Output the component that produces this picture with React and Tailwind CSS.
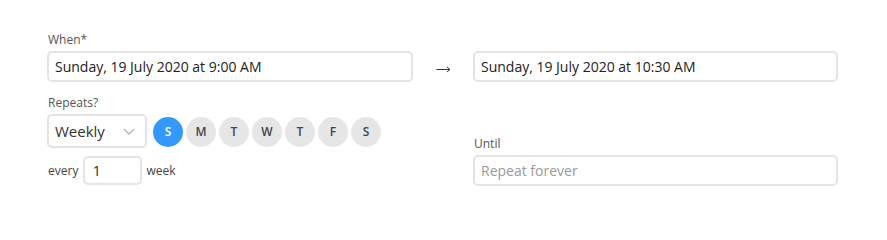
import React from "react";

const DAYS = ["S", "M", "T", "W", "T", "F", "S"];

function Field({ value, placeholder, className = "" }) {
  return (
    <div className={`flex h-[31px] items-center rounded-[5px] border-2 border-[#e4e4e4] bg-white px-[6px] text-[14px] ${className}`}>
      {value ? <span className="text-[#222]">{value}</span> : <span className="text-[#9a9a9a]">{placeholder}</span>}
    </div>
  );
}

export default function App() {
  return (
    <div className="flex bg-white pl-[47px] pt-[32px] h-[220px]" style={{ fontFamily: '"Open Sans", "Noto Sans", sans-serif' }}>
      <div className="w-[366px]">
        <div className="ml-px text-[12px] leading-[16px] text-[#555]">When*</div>
        <Field value="Sunday, 19 July 2020 at 9:00 AM" className="mt-[3px]" />
        <div className="ml-px mt-[13px] text-[12px] leading-[16px] text-[#555]">Repeats?</div>
        <div className="mt-[3px] flex items-center">
          <div className="flex h-[34px] w-[100px] items-center justify-between rounded-[5px] border-2 border-[#e4e4e4] pl-[6px] pr-[10px] text-[15px] text-[#333]">
            <span>Weekly</span>
            <svg width="12" height="7" viewBox="0 0 12 7" fill="none" stroke="#b5b5b5" strokeWidth="1.3">
              <path d="M1 1l5 5 5-5" />
            </svg>
          </div>
          <div className="ml-[6px] mt-[2px] flex gap-[3px]">
            {DAYS.map((d, i) => (
              <div
                key={i}
                className={`grid h-[30px] w-[30px] place-items-center rounded-full text-[12px] font-semibold ${i === 0 ? "bg-[#3399ff] text-white" : "bg-[#e6e6e6] text-[#444]"}`}
              >
                {d}
              </div>
            ))}
          </div>
        </div>
        <div className="mt-[8px] flex items-center text-[12px] text-[#444]">
          <span className="ml-px">every</span>
          <div className="ml-[5px] flex h-[29px] w-[59px] items-center rounded-[5px] border-2 border-[#e4e4e4] px-[7px] text-[15px] text-[#333]">1</div>
          <span className="ml-[4px]">week</span>
        </div>
      </div>
      <div className="flex w-[60px] justify-center pt-[34px]">
        <svg width="15" height="7" viewBox="0 0 15 7" fill="none" stroke="#333" strokeWidth="1">
          <path d="M0.5 3.5h13.5M11 1l3 2.5-3 2.5" />
        </svg>
      </div>
      <div className="w-[365px]">
        <div className="h-[16px]" />
        <Field value="Sunday, 19 July 2020 at 10:30 AM" className="mt-[3px]" />
        <div className="ml-px mt-[54px] text-[12px] leading-[16px] text-[#555]">Until</div>
        <Field placeholder="Repeat forever" className="mt-[3px]" />
      </div>
    </div>
  );
}
